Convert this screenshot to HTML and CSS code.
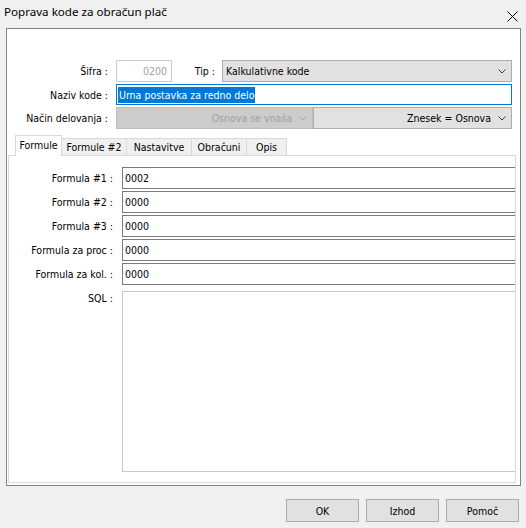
FILE: index.html
```html
<!DOCTYPE html>
<html lang="sl">
<head>
  <meta charset="UTF-8" />
  <title>Poprava kode za obračun plač</title>
  <link rel="stylesheet" href="styles.css">
</head>
<body>
<div class="window">
  <div class="titlebar">
    <span class="title">Poprava kode za obračun plač</span>
    <svg class="close" width="11" height="11" viewBox="0 0 11 11"><path d="M0.5 0.5L10.5 10.5M10.5 0.5L0.5 10.5" stroke="#000" stroke-width="1" fill="none"/></svg>
  </div>

  <div class="frame">
    <div class="head">
      <span class="lbl">Šifra :</span>
      <div class="line">
        <div class="edit off num">0200</div>
        <span class="lbl tip">Tip :</span>
        <div class="combo grow">
          <span class="val">Kalkulativne kode</span>
          <svg class="chev" width="8" height="5" viewBox="0 0 8 5"><polyline points="0.5,0.5 4,4 7.5,0.5" fill="none" stroke="#404040"/></svg>
        </div>
      </div>

      <span class="lbl">Naziv kode :</span>
      <div class="edit focus"><span class="sel">Urna postavka za redno delo</span></div>

      <span class="lbl">Način delovanja :</span>
      <div class="line">
        <div class="combo off right half">
          <span class="val">Osnova se vnaša</span>
          <svg class="chev" width="8" height="5" viewBox="0 0 8 5"><polyline points="0.5,0.5 4,4 7.5,0.5" fill="none" stroke="#a8a8a8"/></svg>
        </div>
        <div class="combo right grow">
          <span class="val">Znesek = Osnova</span>
          <svg class="chev" width="8" height="5" viewBox="0 0 8 5"><polyline points="0.5,0.5 4,4 7.5,0.5" fill="none" stroke="#404040"/></svg>
        </div>
      </div>
    </div>

    <div class="tabs">
      <div class="tab active w1">Formule</div>
      <div class="tab w2">Formule #2</div>
      <div class="tab w3">Nastavitve</div>
      <div class="tab w4">Obračuni</div>
      <div class="tab w5">Opis</div>
    </div>

    <div class="page">
      <div class="fields">
        <span class="lbl">Formula #1 :</span><div class="edit dark">0002</div>
        <span class="lbl">Formula #2 :</span><div class="edit dark">0000</div>
        <span class="lbl">Formula #3 :</span><div class="edit dark">0000</div>
        <span class="lbl">Formula za proc :</span><div class="edit dark">0000</div>
        <span class="lbl">Formula za kol. :</span><div class="edit dark">0000</div>
        <span class="lbl top">SQL :</span><div class="memo"></div>
      </div>
    </div>
  </div>

  <div class="buttons">
    <button class="btn">OK</button>
    <button class="btn">Izhod</button>
    <button class="btn">Pomoč</button>
  </div>
</div>
</body>
</html>
```

FILE: styles.css
```css
body{margin:0;background:#f0f0f0;font:10.5px "DejaVu Sans Condensed","Liberation Sans",Arial,sans-serif;color:#000;}
.window{width:526px;height:528px;display:flex;flex-direction:column;}

/* title bar */
.titlebar{height:28px;display:flex;align-items:flex-start;box-sizing:border-box;padding:4px 0 0 4px;}
.title{font:11.6px "Noto Sans","Liberation Sans",sans-serif;line-height:16px;}
.close{margin:7px 8px 0 auto;}

/* sunken frame with the form */
.frame{width:515px;height:458px;margin-left:6px;box-sizing:border-box;border:1px solid #828282;background:#fff;display:flex;flex-direction:column;}
.head{display:grid;grid-template-columns:101px 1fr;grid-template-rows:22px 21px 22px;column-gap:8px;row-gap:2px;padding:31px 8px 0 0;}
.lbl{display:flex;align-items:center;justify-content:flex-end;white-space:nowrap;}
.lbl.top{align-items:flex-start;padding-top:5px;}
.line{display:flex;}
.grow{flex:1;}
.tip{width:50px;padding-right:7px;box-sizing:border-box;}

.edit{box-sizing:border-box;border:1px solid #7a7a7a;background:#fff;display:flex;align-items:center;padding-left:2px;white-space:nowrap;}
.edit.off{border-color:#cccccc;color:#a0a0a0;}
.edit.num{width:56px;justify-content:flex-end;padding:0 4px 0 0;}
.edit.focus{border-color:#0078d7;padding-left:1px;}
.sel{background:#0078d7;color:#fff;line-height:16px;padding:0 1px;}
.edit.dark{border-right:none;}

.combo{box-sizing:border-box;border:1px solid #adadad;background:#e1e1e1;display:flex;align-items:center;padding:0 5px 0 3px;white-space:nowrap;}
.combo .val{flex:1;}
.combo.right .val{text-align:right;margin-right:7px;}
.combo.off{background:#cccccc;border-color:#bfbfbf;color:#a0a0a0;}
.half{width:197px;}
.chev{flex:none;}

/* tab strip */
.tabs{display:flex;align-items:flex-end;height:20px;margin-top:6px;padding-left:8px;}
.tab{box-sizing:border-box;height:17px;border:1px solid #d9d9d9;border-bottom:none;background:#f0f0f0;display:flex;align-items:center;justify-content:center;margin-left:-1px;}
.tab.active{height:21px;margin-left:0;margin-bottom:-1px;background:#fff;position:relative;z-index:1;padding-bottom:3px;}
.w1{width:47px;}
.w2{width:66px;}
.w3{width:66px;}
.w4{width:56px;}
.w5{width:41px;}

.page{flex:1;margin:0 4px 2px 1px;border:1px solid #d9d9d9;display:flex;flex-direction:column;}
.fields{flex:1;display:grid;grid-template-columns:104px 1fr;grid-template-rows:repeat(5,22px) 1fr;column-gap:9px;row-gap:2px;padding:11px 0 10px 0;}
.fields .memo{margin-top:4px;border:1px solid #c8c8c8;border-right:none;background:#fff;}

/* dialog buttons */
.buttons{display:flex;justify-content:flex-end;gap:7px;padding:13px 7px 0 0;}
.btn{width:73px;height:23px;font:10.5px "DejaVu Sans Condensed","Liberation Sans",Arial,sans-serif;background:#e1e1e1;border:1px solid #adadad;padding:0;color:#000;}
```
